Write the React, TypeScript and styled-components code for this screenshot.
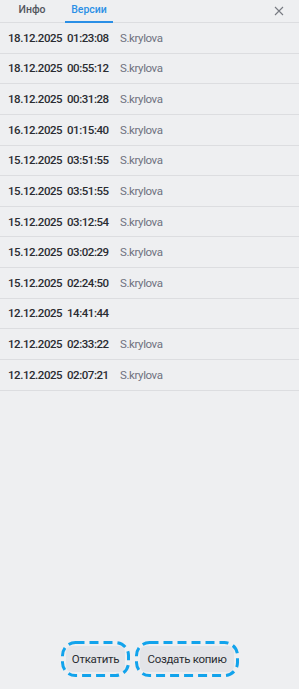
import styled, { createGlobalStyle } from "styled-components";

const GlobalStyle = createGlobalStyle`
  html, body {
    margin: 0;
    padding: 0;
    background: #eeeff1;
  }
  body {
    font-family: Roboto, "Noto Sans", Arial, sans-serif;
  }
`;

const Panel = styled.div`
  width: 299px;
  height: 689px;
  display: flex;
  flex-direction: column;
  background: #eeeff1;
  box-sizing: border-box;
`;

const Header = styled.div`
  height: 22px;
  display: flex;
  align-items: stretch;
  gap: 9px;
  border-bottom: 1px solid #dcdde0;
  padding-left: 8px;
  padding-right: 14px;
`;

const Tab = styled.div<{ $active?: boolean }>`
  width: 48px;
  display: flex;
  align-items: center;
  justify-content: center;
  padding-bottom: 2px;
  font-size: 10.5px;
  font-weight: 500;
  color: ${(p) => (p.$active ? "#2a8fe6" : "#53565e")};
  border-bottom: 2px solid ${(p) => (p.$active ? "#2a8fe6" : "transparent")};
  margin-bottom: -1px;
`;

const Spacer = styled.div`
  flex: 1;
`;

const Close = styled.button`
  border: none;
  background: none;
  padding: 0;
  width: 12px;
  display: flex;
  align-items: center;
  justify-content: center;
  cursor: pointer;
`;

const List = styled.div`
  flex: 1;
  display: flex;
  flex-direction: column;
`;

const Row = styled.div`
  height: 29.64px;
  border-bottom: 1px solid #dcdde0;
  display: grid;
  grid-template-columns: 53px 47px auto;
  column-gap: 6px;
  align-items: center;
  padding-left: 8px;
  font-size: 11.5px;
`;

const Stamp = styled.span`
  color: #2a2c31;
  font-weight: 500;
  letter-spacing: -0.45px;
  white-space: nowrap;
`;

const User = styled.span`
  color: #6e7280;
  letter-spacing: -0.4px;
  white-space: nowrap;
`;

const Footer = styled.div`
  display: flex;
  justify-content: center;
  gap: 5px;
  padding: 0 0 12px 1px;
`;

const Focus = styled.div<{ $w: number }>`
  position: relative;
  width: ${(p) => p.$w}px;
  height: 36px;
  display: flex;
  align-items: center;
  justify-content: center;
`;

const Ring = styled.svg`
  position: absolute;
  inset: 0;
  pointer-events: none;
`;

const Button = styled.button`
  height: 26px;
  width: calc(100% - 10px);
  padding: 0;
  border: none;
  border-radius: 6px;
  background: #e3e4e8;
  color: #2a2c31;
  font-family: Roboto, "Noto Sans", Arial, sans-serif;
  font-size: 11.5px;
  letter-spacing: -0.3px;
  cursor: pointer;
`;

const FocusButton = ({ w, children }: { w: number; children: string }) => (
  <Focus $w={w}>
    <Button>{children}</Button>
    <Ring width={w} height={36}>
      <rect
        x={1.5}
        y={1.5}
        width={w - 3}
        height={33}
        rx={13}
        fill="none"
        stroke="#12a3ec"
        strokeWidth={3}
        strokeDasharray="9 5"
      />
    </Ring>
  </Focus>
);

const versions = [
  { date: "18.12.2025", time: "01:23:08", user: "S.krylova" },
  { date: "18.12.2025", time: "00:55:12", user: "S.krylova" },
  { date: "18.12.2025", time: "00:31:28", user: "S.krylova" },
  { date: "16.12.2025", time: "01:15:40", user: "S.krylova" },
  { date: "15.12.2025", time: "03:51:55", user: "S.krylova" },
  { date: "15.12.2025", time: "03:51:55", user: "S.krylova" },
  { date: "15.12.2025", time: "03:12:54", user: "S.krylova" },
  { date: "15.12.2025", time: "03:02:29", user: "S.krylova" },
  { date: "15.12.2025", time: "02:24:50", user: "S.krylova" },
  { date: "12.12.2025", time: "14:41:44", user: "" },
  { date: "12.12.2025", time: "02:33:22", user: "S.krylova" },
  { date: "12.12.2025", time: "02:07:21", user: "S.krylova" },
];

const App = () => (
  <>
    <GlobalStyle />
    <Panel>
      <Header>
        <Tab>Инфо</Tab>
        <Tab $active>Версии</Tab>
        <Spacer />
        <Close aria-label="Закрыть">
          <svg width="10" height="10" viewBox="0 0 10 10">
            <path d="M1 1 L9 9 M9 1 L1 9" stroke="#777a82" strokeWidth="1.1" fill="none" />
          </svg>
        </Close>
      </Header>
      <List>
        {versions.map((v, i) => (
          <Row key={i}>
            <Stamp>{v.date}</Stamp>
            <Stamp>{v.time}</Stamp>
            <User>{v.user}</User>
          </Row>
        ))}
      </List>
      <Footer>
        <FocusButton w={69}>Откатить</FocusButton>
        <FocusButton w={104}>Создать копию</FocusButton>
      </Footer>
    </Panel>
  </>
);

export default App;
